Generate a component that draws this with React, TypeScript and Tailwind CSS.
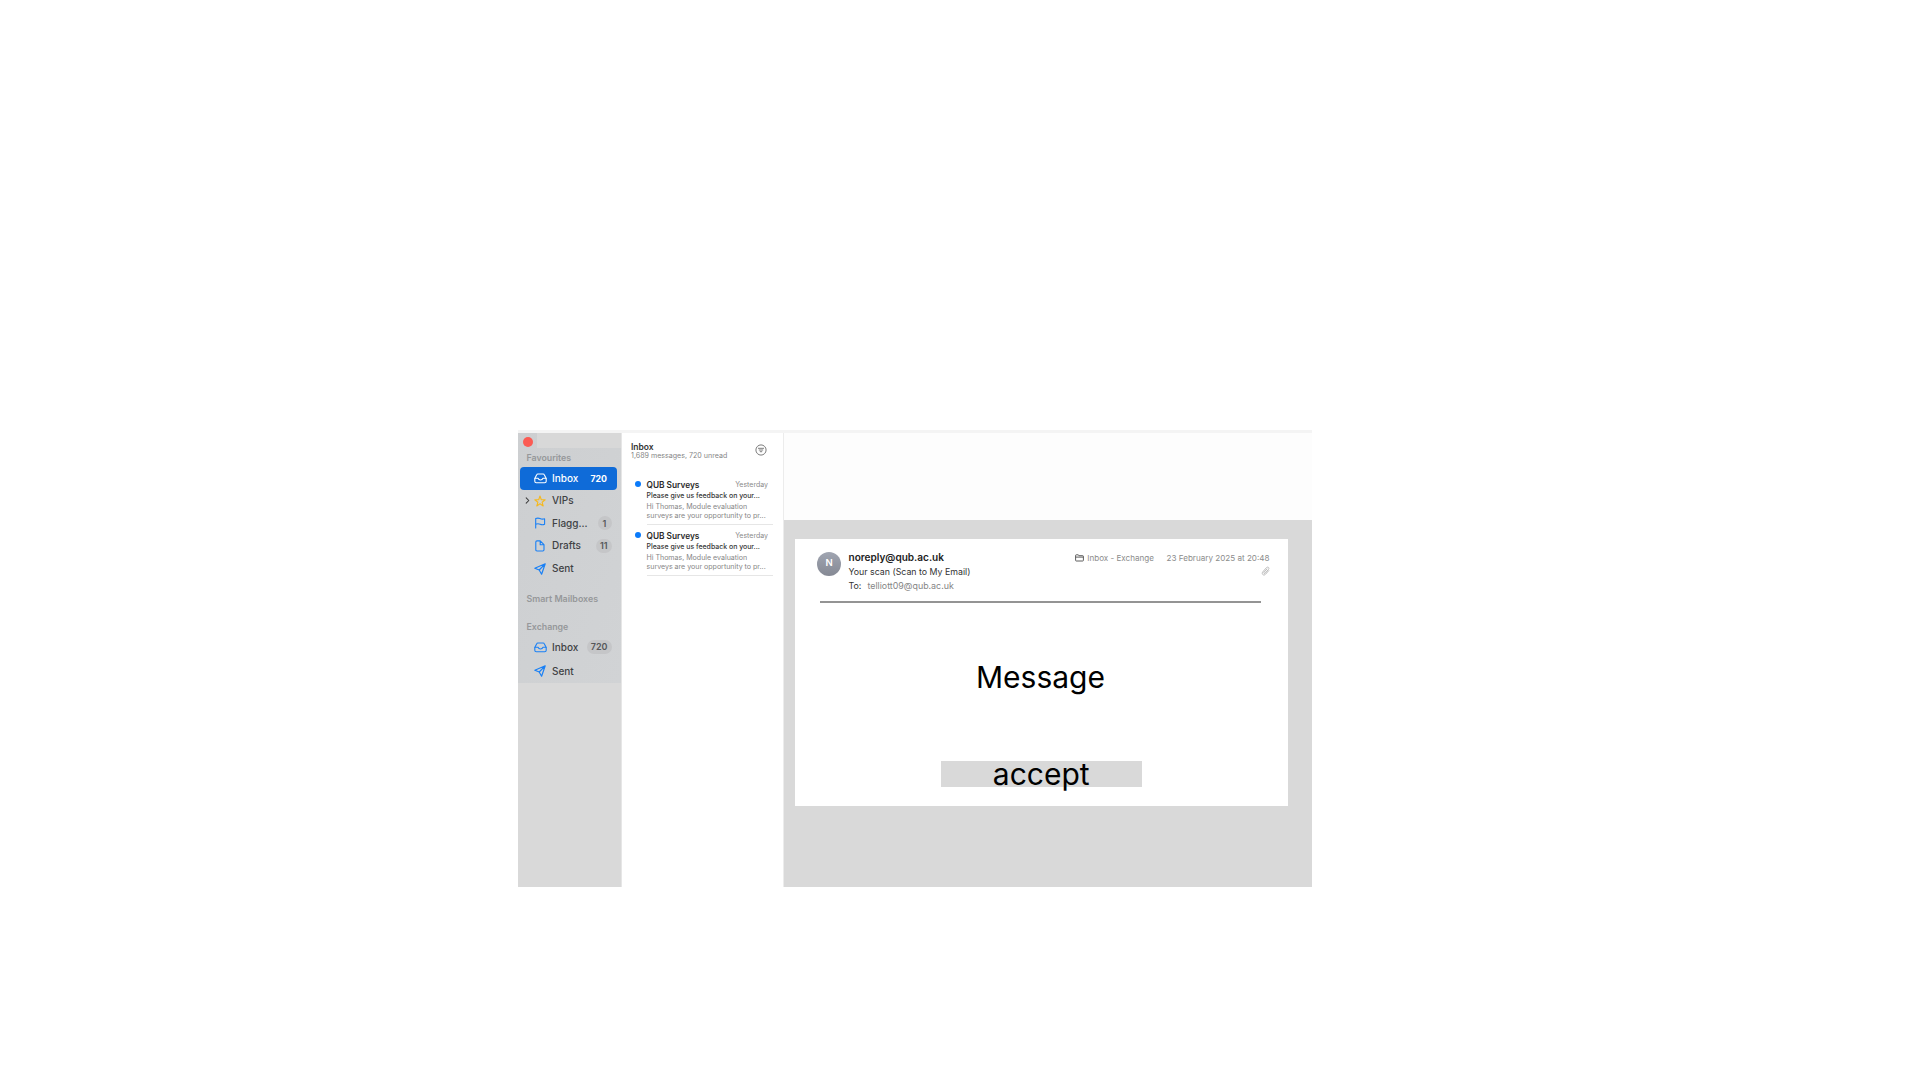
import React from "react";

type IconProps = { className?: string };

const TrayIcon = ({ className = "" }: IconProps) => (
  <svg viewBox="0 0 13 11" className={`h-[11px] w-[13px] ${className}`} fill="none" stroke="currentColor" strokeWidth="1.1" strokeLinejoin="round" strokeLinecap="round">
    <path d="M0.8 5.6 L2.6 1.9 Q3 1 3.9 1 H9.1 Q10 1 10.4 1.9 L12.2 5.6 V8.2 Q12.2 9.7 10.7 9.7 H2.3 Q0.8 9.7 0.8 8.2 Z" />
    <path d="M1 5.3 H4 Q4.7 7 6.5 7 T9 5.3 H12" />
  </svg>
);
const StarIcon = () => (
  <svg viewBox="0 0 12 12" className="h-3 w-3 text-[#f5b921]" fill="none" stroke="currentColor" strokeWidth="1.1" strokeLinejoin="round">
    <path d="M6 1 L7.3 4.7 L11.2 4.8 L8.1 7.2 L9.2 11 L6 8.8 L2.8 11 L3.9 7.2 L0.8 4.8 L4.7 4.7 Z" />
  </svg>
);
const FlagIcon = () => (
  <svg viewBox="0 0 12 12" className="h-3 w-3 text-[#1a80f5]" fill="none" stroke="currentColor" strokeWidth="1.1" strokeLinecap="round" strokeLinejoin="round">
    <path d="M1.7 11 V1.6 Q3.9 0.6 6 1.6 T10.6 1.8 V7.2 Q8.4 8.2 6.2 7.2 T1.7 7.2" />
  </svg>
);
const DocIcon = () => (
  <svg viewBox="0 0 12 12" className="h-3 w-3 text-[#1a80f5]" fill="none" stroke="currentColor" strokeWidth="1.1" strokeLinejoin="round">
    <path d="M3 0.9 H6.2 L10 4.7 V9.8 Q10 11 8.8 11 H3 Q1.8 11 1.8 9.8 V2.1 Q1.8 0.9 3 0.9 Z M6.2 0.9 V4.7 H10" />
  </svg>
);
const PlaneIcon = () => (
  <svg viewBox="0 0 12 12" className="h-3 w-3 text-[#1a80f5]" fill="none" stroke="currentColor" strokeWidth="1.2" strokeLinejoin="round">
    <path d="M0.8 5.2 L11.2 0.8 L7.6 11.2 L5.2 7 Z M5.2 7 L11.2 0.8" />
  </svg>
);

type RowProps = {
  icon: React.ReactNode;
  label: string;
  count?: string;
  height: string;
  chevron?: boolean;
};

function MailboxRow({ icon, label, count, height, chevron }: RowProps) {
  return (
    <div className={`flex items-center pr-[9.5px] text-[10px] text-[#404245] ${height}`}>
      <div className="flex w-[15px] justify-end pr-[3px]">
        {chevron && (
          <svg viewBox="0 0 5 8" className="h-[7px] w-[5px] shrink-0" fill="none" stroke="#3a3a3a" strokeWidth="1.2" strokeLinecap="round" strokeLinejoin="round">
            <path d="M1 1 L4 4 L1 7" />
          </svg>
        )}
      </div>
      <div className="flex w-[14px] justify-center">{icon}</div>
      <span className="ml-[5px] flex-1 font-[450]">{label}</span>
      {count && (
        <span className="flex h-[14px] min-w-[14px] items-center justify-center rounded-full bg-[#c5c6c8] px-[4px] text-[9px] font-semibold text-[#55575a]">
          {count}
        </span>
      )}
    </div>
  );
}

function Sidebar() {
  return (
    <aside className="w-[104px] shrink-0 border-r border-[#e6e6e6] bg-[#d9d9d9]">
      <div className="h-[250px] bg-gradient-to-br from-[#cdcfd1] to-[#d1d3d5]">
        <div className="flex h-[15px]">
          <div className="flex w-[19px] items-center pl-[4.5px] pt-[2px]">
            <div className="h-[10px] w-[10px] shrink-0 rounded-full bg-[#fb5b53]" />
          </div>
          <div className="flex-1 bg-[#d8d8d8]" />
        </div>
        <h2 className="h-[19px] pl-[8.5px] text-[8.8px] font-semibold leading-[19px] text-[#96989a]">Favourites</h2>
        <div className="ml-[2px] flex h-[22.5px] w-[96.5px] items-center rounded-[4px] bg-[#0f6bd8] pl-[13.5px] pr-[9.5px] text-white">
          <TrayIcon />
          <span className="ml-[5.5px] flex-1 text-[10px] font-medium">Inbox</span>
          <span className="text-[8.8px] font-bold">720</span>
        </div>
        <MailboxRow icon={<StarIcon />} label="VIPs" height="h-[22.5px]" chevron />
        <MailboxRow icon={<FlagIcon />} label="Flagg..." count="1" height="h-[22.5px]" />
        <MailboxRow icon={<DocIcon />} label="Drafts" count="11" height="h-[22.5px]" />
        <MailboxRow icon={<PlaneIcon />} label="Sent" height="h-[23px]" />
        <h2 className="mt-[9px] h-[20px] whitespace-nowrap pl-[8.5px] text-[8.9px] font-semibold leading-[20px] text-[#96989a]">Smart Mailboxes</h2>
        <h2 className="mt-[9px] h-[18px] pl-[8.5px] text-[8.8px] font-semibold leading-[18px] text-[#96989a]">Exchange</h2>
        <MailboxRow icon={<TrayIcon className="text-[#1a80f5]" />} label="Inbox" count="720" height="h-[22px]" />
        <MailboxRow icon={<PlaneIcon />} label="Sent" height="h-[26px]" />
      </div>
    </aside>
  );
}

function MessageItem() {
  return (
    <li className="flex h-[51px] pl-[13px] pr-[10px]">
      <div className="mt-[7px] h-[6px] w-[6px] shrink-0 rounded-full bg-[#0a7bfa]" />
      <div className="ml-[5.5px] flex-1 whitespace-nowrap border-b border-[#e6e6e6] pt-[5px]">
        <div className="flex h-[12px] items-center justify-between pr-[5px]">
          <span className="text-[8.3px] font-semibold text-[#2a2a2a]">QUB Surveys</span>
          <span className="text-[7px] text-[#8a8a8a]">Yesterday</span>
        </div>
        <p className="h-[10px] text-[6.95px] font-medium leading-[10px] text-[#363636]">Please give us feedback on your...</p>
        <p className="h-[10px] text-[7.05px] leading-[11px] text-[#868686]">Hi Thomas, Module evaluation</p>
        <p className="h-[9px] text-[7.05px] leading-[9px] text-[#868686]">surveys are your opportunity to pr...</p>
      </div>
    </li>
  );
}

function MessageList() {
  return (
    <section className="w-[162px] shrink-0 border-r border-[#ececec] bg-white">
      <header className="flex h-[41px] justify-between pl-[9px] pr-[16px] pt-[8px]">
        <div>
          <h1 className="h-[11px] text-[8.5px] font-semibold leading-[12px] text-[#333]">Inbox</h1>
          <p className="h-[8px] whitespace-nowrap text-[7.1px] leading-[8px] text-[#858585]">1,689 messages, 720 unread</p>
        </div>
        <svg viewBox="0 0 12 12" className="mt-[3px] h-3 w-3" fill="none" stroke="#7c7c7c">
          <circle cx="6" cy="6" r="5.1" strokeWidth="1" />
          <path d="M3.4 4.3 H8.6 M4.2 6 H7.8 M5.2 7.7 H6.8" strokeWidth="1" strokeLinecap="round" />
        </svg>
      </header>
      <ul>
        <MessageItem />
        <MessageItem />
      </ul>
    </section>
  );
}

function MessageCard() {
  return (
    <article className="ml-[10.5px] mt-[19px] h-[267px] w-[493.5px] bg-white">
      <header className="ml-[25.5px] mr-[27.5px] flex h-[64px] border-b-2 border-[#949494] pt-[10px]">
        <div className="-ml-[3px] mt-[2.5px] flex h-[24px] w-[24px] shrink-0 items-center justify-center rounded-full bg-gradient-to-b from-[#a0a5b1] to-[#858994] text-[9.5px] font-semibold text-white">
          N
        </div>
        <div className="ml-[7.5px] flex-1 whitespace-nowrap">
          <p className="h-[16px] text-[10.05px] font-semibold leading-[16px] text-[#222]">noreply@qub.ac.uk</p>
          <p className="h-[14px] text-[8.8px] leading-[14px] text-[#333]">Your scan (Scan to My Email)</p>
          <p className="flex h-[14px] gap-[6px] text-[8.9px] leading-[14px] text-[#858585]">
            <span className="text-[#333]">To:</span>
            <span>telliott09@qub.ac.uk</span>
          </p>
        </div>
        <div className="-mr-[9px] flex flex-col items-end whitespace-nowrap text-[8.1px] text-[#8c8c8c]">
          <div className="flex h-[18px] items-center">
            <svg viewBox="0 0 9 8" className="mr-[3px] h-[8px] w-[9px]" fill="none" stroke="#4c4c4c" strokeWidth="0.9" strokeLinejoin="round">
              <path d="M0.6 6.3 V1.5 Q0.6 0.8 1.3 0.8 H3.1 L4 1.7 H7.7 Q8.4 1.7 8.4 2.4 V6.3 Q8.4 7 7.7 7 H1.3 Q0.6 7 0.6 6.3 Z M0.6 3.1 H8.4" />
            </svg>
            <span>Inbox - Exchange</span>
            <span className="ml-[12.5px]">23 February 2025 at 20:48</span>
          </div>
          <svg viewBox="0 0 9 10" className="-mt-px h-[10px] w-[9px]" fill="none" stroke="#b4b4b4" strokeWidth="0.9" strokeLinecap="round">
            <path d="M7.8 4.6 L4.4 8.4 C2.6 10.1 0.2 8 1.7 6 L5.4 1.7 C6.8 0.2 8.8 1.8 7.5 3.4 L4.1 7.2 C3.3 7.9 2.4 7.2 3 6.3 L5.9 3" />
          </svg>
        </div>
      </header>
      <div className="flex flex-col items-center text-[30px] text-black">
        <p className="mr-[1.5px] mt-[54px] h-[40px] leading-[40px]">Message</p>
        <button className="mt-[64px] flex h-[26px] w-[201px] items-center justify-center bg-[#d9d9d9] leading-[26px]">accept</button>
      </div>
    </article>
  );
}

export default function App() {
  return (
    <div className="min-h-screen bg-white pl-[518px] pt-[430px] font-['Inter',sans-serif]">
      <main className="flex h-[457px] w-[794px] flex-col border-t-[3px] border-[#f4f4f4]">
        <div className="flex flex-1">
          <Sidebar />
          <MessageList />
          <section className="flex-1 bg-[#d9d9d9]">
            <div className="h-[87px] bg-[#fdfdfd]" />
            <MessageCard />
          </section>
        </div>
      </main>
    </div>
  );
}
